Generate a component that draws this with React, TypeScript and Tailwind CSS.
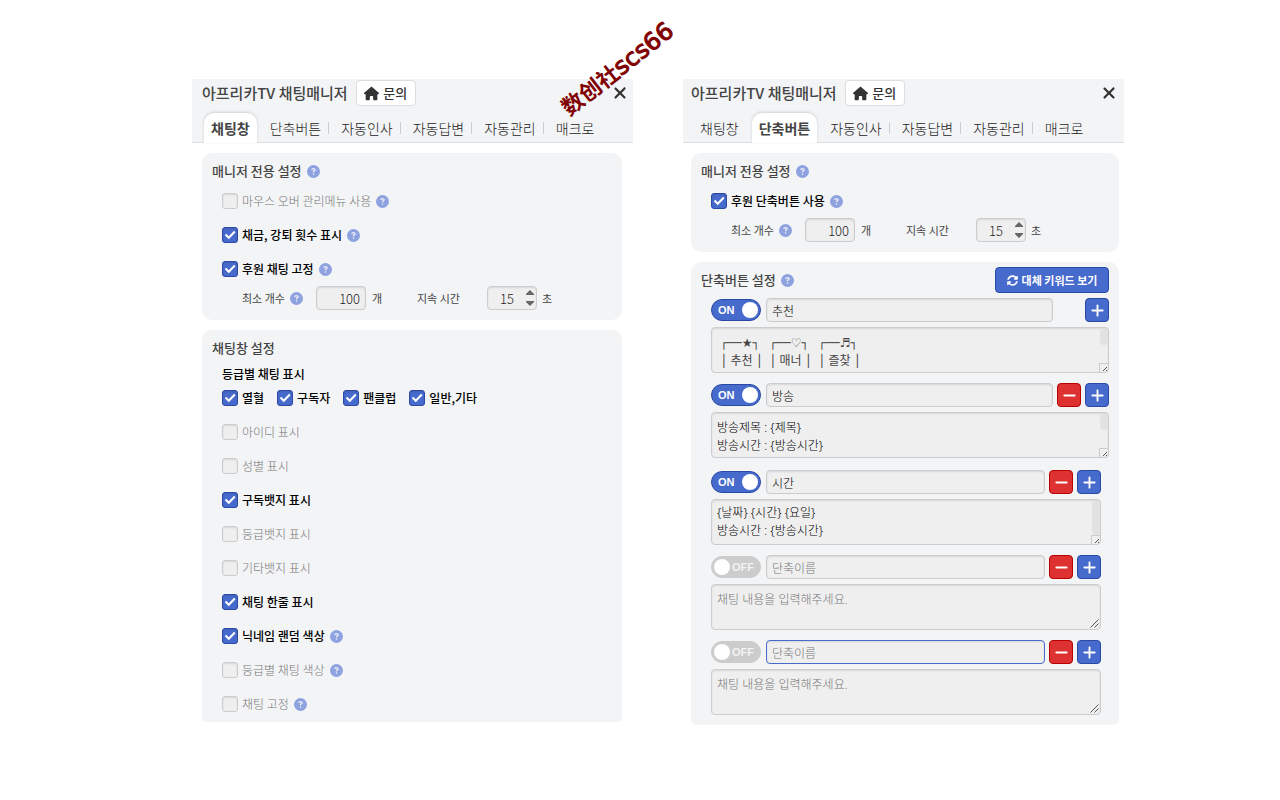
import { useId } from "react";
import { FaSyncAlt } from "react-icons/fa";
import { FaCircleQuestion, FaHouse, FaMinus, FaPlus, FaXmark } from "react-icons/fa6";

const TABS = ["채팅창", "단축버튼", "자동인사", "자동답변", "자동관리", "매크로"];

const GRADES = ["열혈", "구독자", "팬클럽", "일반,기타"];

const CHAT_OPTIONS = [
  { label: "아이디 표시", on: false },
  { label: "성별 표시", on: false },
  { label: "구독뱃지 표시", on: true },
  { label: "등급뱃지 표시", on: false },
  { label: "기타뱃지 표시", on: false },
  { label: "채팅 한줄 표시", on: true },
  { label: "닉네임 랜덤 색상", on: true, help: true },
  { label: "등급별 채팅 색상", on: false, help: true },
  { label: "채팅 고정", on: false, help: true },
];

function Help() {
  return (
    <button type="button" aria-label="도움말" className="shrink-0 text-[#8fa2e0]">
      <FaCircleQuestion className="size-[13px]" />
    </button>
  );
}

function Check({ label, on, help }: { label: string; on: boolean; help?: boolean }) {
  return (
    <div className="flex items-center gap-[5px]">
      <label className="flex items-center gap-1">
        <span className="grid size-4">
          <input
            type="checkbox"
            defaultChecked={on}
            className="peer size-4 appearance-none rounded-[3px] border border-[#ccc] bg-[#efefef] shadow-[inset_0_1px_2px_rgba(0,0,0,0.1)] [grid-area:1/1] checked:border-[#2b48a3] checked:bg-[#476acd]"
          />
          <svg
            viewBox="0 0 16 16"
            className="pointer-events-none hidden size-4 fill-none stroke-white stroke-2 [grid-area:1/1] peer-checked:block"
          >
            <path d="M3.5 7.5 L6.8 10.8 L12.8 4.5" />
          </svg>
        </span>
        <span className={on ? "text-xs font-medium text-black" : "text-xs font-light text-[#777]"}>
          {label}
        </span>
      </label>
      {help && <Help />}
    </div>
  );
}

function CheckRow(props: { label: string; on: boolean; help?: boolean }) {
  return (
    <div className="flex h-[34px] items-center pl-2.5">
      <Check {...props} />
    </div>
  );
}

function NumberRow() {
  const countId = useId();
  const timeId = useId();
  const box =
    "h-6 w-[50px] appearance-none rounded border border-[#ccc] bg-[#efefef] text-right text-[13px] font-light text-[#222] shadow-[inset_0_1px_2px_rgba(0,0,0,0.1)] [&::-webkit-inner-spin-button]:appearance-none";

  return (
    <div className="flex h-6 items-center pl-[30px] text-[11px] text-[#444]">
      <div className="flex w-[74px] items-center gap-[5px]">
        <label htmlFor={countId}>최소 개수</label>
        <Help />
      </div>
      <input id={countId} type="number" defaultValue={100} className={box + " pr-[5px]"} />
      <span className="w-[51px] pl-1.5">개</span>
      <label htmlFor={timeId} className="w-[70px]">
        지속 시간
      </label>
      <div className="relative">
        <input id={timeId} type="number" defaultValue={15} className={box + " pr-[22px]"} />
        <svg
          viewBox="0 0 8 16"
          className="pointer-events-none absolute top-1 right-[3px] h-4 w-2 fill-[#666]"
        >
          <path d="M4 0 L8 4 V5 H0 V4 Z M0 11 H8 V12 L4 16 L0 12 Z" />
        </svg>
      </div>
      <span className="pl-[5px]">초</span>
    </div>
  );
}

function Header({ active }: { active: number }) {
  return (
    <header
      className={
        active === 0
          ? "border-b border-[#ddd] bg-[#f3f4f6] pr-1 pl-2.5"
          : "border-b border-[#ddd] bg-[#f3f4f6] pr-1.5 pl-2"
      }
    >
      <div className="flex h-7 items-center">
        <h1 className="text-[15px] font-medium text-[#444]">아프리카TV 채팅매니저</h1>
        <a
          href="#contact"
          className="ml-2 flex h-[26px] w-[60px] items-center justify-center gap-1 rounded border border-[#ddd] bg-white text-[13px] font-medium text-[#333]"
        >
          <FaHouse className="size-[15px]" />
          문의
        </a>
        <button type="button" aria-label="닫기" className="ml-auto text-[#333]">
          <FaXmark className="size-[18px]" />
        </button>
      </div>
      <nav className="mt-1.5 -mb-px flex h-[30px] pl-0.5 text-sm font-light text-[#222]">
        {TABS.map((tab, i) => (
          <div key={tab} className="flex items-center">
            {i > 0 && (
              <span
                className={
                  i === active || i - 1 === active
                    ? "h-3 w-1.5"
                    : "h-3 w-1.5 border-l border-[#ccc]"
                }
              />
            )}
            <a
              href="#tab"
              className={
                i === active
                  ? "flex h-full items-center rounded-t-[10px] bg-white px-[7px] font-bold text-[#444] shadow-[0_-1px_3px_rgba(0,0,0,0.15)]"
                  : "flex h-full items-center px-[7px]"
              }
            >
              {tab}
            </a>
          </div>
        ))}
      </nav>
    </header>
  );
}

function SectionTitle({ title, help }: { title: string; help?: boolean }) {
  return (
    <div className="flex h-[26px] items-center gap-[5px]">
      <h2 className="text-[13px] font-medium text-[#444]">{title}</h2>
      {help && <Help />}
    </div>
  );
}

function Toggle({ on }: { on: boolean }) {
  return (
    <label
      className={
        on
          ? "relative flex h-[22px] w-[50px] shrink-0 items-center justify-between rounded-full border border-[#2b48a3] bg-[#476acd] pr-[2px] pl-1.5 text-white"
          : "relative flex h-[22px] w-[50px] shrink-0 flex-row-reverse items-center justify-between rounded-full border border-[#ccc] bg-[#ccc] pr-1.5 pl-[2px] text-[#f3f3f3]"
      }
    >
      <input type="checkbox" role="switch" defaultChecked={on} className="sr-only" />
      <span className="font-['Liberation_Sans',sans-serif] text-[11px] font-bold">
        {on ? "ON" : "OFF"}
      </span>
      <span className="size-4 rounded-full bg-white" />
    </label>
  );
}

type ShortcutProps = {
  name?: string;
  text?: string;
  removable?: boolean;
  focused?: boolean;
  narrow?: boolean;
  longThumb?: boolean;
};

function Shortcut({ name, text, removable = true, focused, narrow, longThumb }: ShortcutProps) {
  const on = name !== undefined;
  return (
    <li className={narrow ? "pr-2" : ""}>
      <div className="flex h-6 items-center">
        <Toggle on={on} />
        <input
          type="text"
          aria-label="단축이름"
          placeholder="단축이름"
          defaultValue={name}
          className={
            "mr-1 ml-[5px] h-6 min-w-0 flex-1 rounded border bg-[#efefef] px-[5px] text-xs font-light text-black shadow-[inset_0_1px_2px_rgba(0,0,0,0.1)] placeholder:text-[#777] " +
            (focused ? "border-[#476acd]" : "border-[#ccc]")
          }
        />
        {removable ? (
          <button
            type="button"
            aria-label="삭제"
            className="mr-1 flex size-6 items-center justify-center rounded border border-[#b80000] bg-[#de3232] text-white"
          >
            <FaMinus className="size-[15px]" />
          </button>
        ) : (
          <span className="mr-1 size-6" />
        )}
        <button
          type="button"
          aria-label="추가"
          className="flex size-6 items-center justify-center rounded border border-[#2b48a3] bg-[#476acd] text-white"
        >
          <FaPlus className="size-[15px]" />
        </button>
      </div>
      <div className="relative mt-[5px]">
        <textarea
          aria-label="채팅 내용"
          placeholder="채팅 내용을 입력해주세요."
          defaultValue={text}
          className={
            "block h-[46px] w-full resize-none overflow-hidden rounded border border-[#ccc] bg-[#efefef] px-[5px] font-['Noto_Sans','DejaVu_Sans','Noto_Sans_CJK_KR',sans-serif] text-xs leading-[18px] shadow-[inset_0_1px_2px_rgba(0,0,0,0.1)] placeholder:text-[#777] " +
            (removable ? "font-light text-black " : "text-[#444] ") +
            (longThumb ? "pt-1" : "pt-1.5")
          }
        />
        {text ? (
          <>
            <span
              className={
                "absolute top-[2px] right-px w-2 rounded bg-[#e2e2e2] " +
                (longThumb ? "h-[34px]" : "h-4")
              }
            />
            <svg viewBox="0 0 9 9" className="absolute right-px bottom-px size-[9px] fill-none">
              <path d="M0.5 9 V0.5 H9" stroke="#ccc" />
              <path d="M4 8 L8 4 M7 8 L8 7" stroke="#555" />
            </svg>
          </>
        ) : (
          <svg
            viewBox="0 0 9 9"
            className="absolute right-[2px] bottom-[2px] size-[9px] fill-none stroke-[#555]"
          >
            <path d="M0.5 8.5 L8.5 0.5 M4.5 8.5 L8.5 4.5" />
          </svg>
        )}
      </div>
    </li>
  );
}

function ChatPanel() {
  return (
    <section>
      <Header active={0} />
      <div className="flex flex-col gap-2.5 pt-2.5 pr-[11px] pl-2.5">
        <div className="rounded-[10px] bg-[#f3f4f6] px-2.5 pt-[5px] pb-2.5">
          <SectionTitle title="매니저 전용 설정" help />
          <CheckRow label="마우스 오버 관리메뉴 사용" on={false} help />
          <CheckRow label="채금, 강퇴 횟수 표시" on help />
          <CheckRow label="후원 채팅 고정" on help />
          <NumberRow />
        </div>
        <div className="rounded-t-[10px] rounded-b-[3px] bg-[#f3f4f6] px-2.5 pt-[5px] pb-px">
          <SectionTitle title="채팅창 설정" />
          <h3 className="flex h-[26px] items-center pl-2.5 text-xs font-medium text-black">
            등급별 채팅 표시
          </h3>
          <div className="mb-1.5 flex h-[22px] items-center gap-[13px] pl-2.5">
            {GRADES.map((grade) => (
              <Check key={grade} label={grade} on />
            ))}
          </div>
          {CHAT_OPTIONS.map((option) => (
            <CheckRow key={option.label} {...option} />
          ))}
        </div>
      </div>
    </section>
  );
}

function ShortcutPanel() {
  return (
    <section>
      <Header active={1} />
      <div className="flex flex-col gap-2.5 pt-2.5 pr-[5px] pl-2">
        <div className="rounded-[10px] bg-[#f3f4f6] px-2.5 pt-[5px] pb-2.5">
          <SectionTitle title="매니저 전용 설정" help />
          <CheckRow label="후원 단축버튼 사용" on help />
          <NumberRow />
        </div>
        <div className="rounded-t-[10px] rounded-b-[5px] bg-[#f3f4f6] px-2.5 pt-[5px] pb-2.5">
          <div className="flex items-center justify-between">
            <SectionTitle title="단축버튼 설정" help />
            <button
              type="button"
              className="flex h-[26px] w-[114px] items-center justify-center gap-1 rounded border border-[#2b48a3] bg-[#476acd] text-[11px] font-bold text-white"
            >
              <FaSyncAlt className="size-[11px]" />
              대체 키워드 보기
            </button>
          </div>
          <ul className="flex flex-col gap-2.5 pt-[5px] pl-2.5">
            <Shortcut
              name="추천"
              text={" ┌──★┐   ┌──♡┐   ┌──♬┐\n │ 추천 │  │ 매너 │  │ 즐찾 │"}
              removable={false}
            />
            <Shortcut name="방송" text={"방송제목 : {제목}\n방송시간 : {방송시간}"} />
          </ul>
          <ul className="mt-3 flex flex-col gap-2.5 pl-2.5">
            <Shortcut
              name="시간"
              text={"{날짜} {시간} {요일}\n방송시간 : {방송시간}"}
              narrow
              longThumb
            />
            <Shortcut narrow />
            <Shortcut narrow focused />
          </ul>
        </div>
      </div>
    </section>
  );
}

export default function App() {
  return (
    <main className="relative min-h-screen bg-white pt-[79px] pr-[156px] pb-[75px] pl-[15%] font-['Noto_Sans_CJK_KR',sans-serif]">
      <div className="grid grid-cols-2 gap-[50px]">
        <ChatPanel />
        <ShortcutPanel />
      </div>
      <div className="pointer-events-none absolute top-[53px] left-[550px] flex h-8 -rotate-[38deg] items-center font-['DejaVu_Sans','Noto_Sans_CJK_SC',sans-serif] whitespace-nowrap text-[#800000]">
        <span className="text-[22px] font-bold">数创社</span>
        <span className="text-2xl [-webkit-text-stroke:1px_#800000]">scs66</span>
      </div>
    </main>
  );
}
